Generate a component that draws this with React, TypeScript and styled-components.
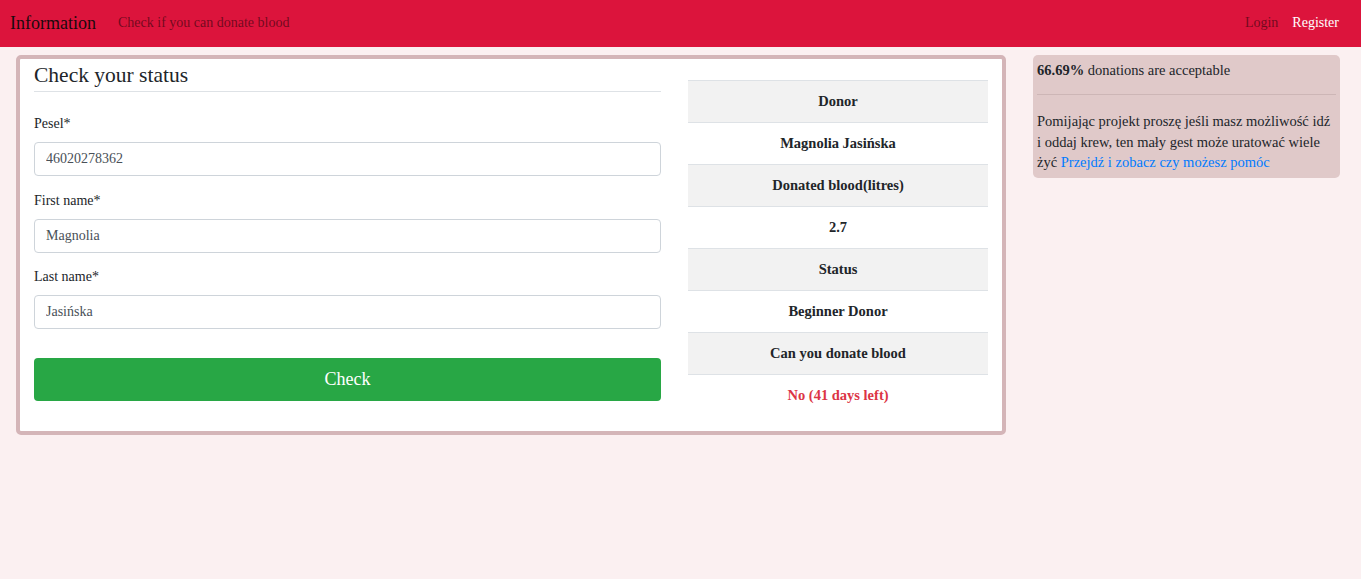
import React from "react";
import styled, { createGlobalStyle } from "styled-components";

const Global = createGlobalStyle`
  html, body { margin: 0; padding: 0; }
  body {
    background: #fbf0f1;
    font-family: "Liberation Serif", "Times New Roman", serif;
    font-size: 14px;
    color: #212529;
  }
  * { box-sizing: border-box; }
`;

const Nav = styled.nav`
  height: 47px;
  background: #dc143c;
  display: flex;
  align-items: center;
  padding: 0 22px 1px 10px;
`;

const Brand = styled.a`
  font-size: 18px;
  color: #1a0a0d;
  margin-right: 22px;
  text-decoration: none;
`;

const NavLink = styled.a<{ $light?: boolean }>`
  font-size: 14px;
  color: ${(p) => (p.$light ? "#ffffff" : "rgba(0,0,0,0.5)")};
  text-decoration: none;
  margin-left: ${(p) => (p.$light ? "14px" : "0")};
`;

const Spacer = styled.div`
  flex: 1;
`;

const Page = styled.div`
  display: grid;
  grid-template-columns: 990px 307px;
  column-gap: 27px;
  padding: 8px 0 0 16px;
  align-items: start;
`;

const Card = styled.section`
  background: #fff;
  border: 4px solid #d4b5b8;
  border-radius: 5px;
  display: grid;
  grid-template-columns: 1fr 300px;
  column-gap: 27px;
  padding: 0 14px 14px 14px;
`;

const Form = styled.form`
  display: flex;
  flex-direction: column;
`;

const Title = styled.h4`
  font-size: 21.5px;
  font-weight: 400;
  margin: 4px 0 0 0;
  line-height: 25px;
`;

const Rule = styled.hr`
  border: 0;
  border-top: 1px solid #dee2e6;
  margin: 3px 0 22px 0;
`;

const Group = styled.div`
  display: flex;
  flex-direction: column;
  margin-bottom: 14.5px;
`;

const Label = styled.label`
  line-height: 20px;
  margin-bottom: 8px;
`;

const Input = styled.input`
  height: 34px;
  border: 1px solid #ced4da;
  border-radius: 4px;
  padding: 0 11px;
  font-family: inherit;
  font-size: 14px;
  color: #495057;
  background: #fff;
`;

const Button = styled.button`
  margin-top: 14.5px;
  height: 43px;
  border: 0;
  border-radius: 4px;
  background: #28a745;
  color: #fff;
  font-family: inherit;
  font-size: 18px;
`;

const Table = styled.table`
  border-collapse: collapse;
  width: 300px;
  margin-top: 21px;
`;

const Cell = styled.td<{ $striped?: boolean; $danger?: boolean }>`
  height: 42px;
  padding: 0;
  text-align: center;
  font-weight: 700;
  font-size: 14.5px;
  border-top: 1px solid #dee2e6;
  background: ${(p) => (p.$striped ? "#f2f2f2" : "#fff")};
  color: ${(p) => (p.$danger ? "#dc3545" : "#212529")};
`;

const Side = styled.aside`
  background: #e0c9c9;
  border-radius: 5px;
  padding: 5px 4px;
  line-height: 20px;
  font-size: 14.5px;
`;

const SideP = styled.p`
  margin: 0;
`;

const SideRule = styled.hr`
  border: 0;
  border-top: 1px solid #cdb6b6;
  margin: 14px 0 16px 0;
`;

const SideText = styled.p`
  margin: 0;
  line-height: 20.5px;
`;

const Link = styled.a`
  color: #007bff;
  text-decoration: none;
`;

const rows: { text: string; danger?: boolean }[] = [
  { text: "Donor" },
  { text: "Magnolia Jasińska" },
  { text: "Donated blood(litres)" },
  { text: "2.7" },
  { text: "Status" },
  { text: "Beginner Donor" },
  { text: "Can you donate blood" },
  { text: "No (41 days left)", danger: true },
];

export default function App() {
  return (
    <>
      <Global />
      <Nav>
        <Brand href="#">Information</Brand>
        <NavLink href="#">Check if you can donate blood</NavLink>
        <Spacer />
        <NavLink href="#">Login</NavLink>
        <NavLink href="#" $light>
          Register
        </NavLink>
      </Nav>
      <Page>
        <Card>
          <Form onSubmit={(e) => e.preventDefault()}>
            <Title>Check your status</Title>
            <Rule />
            <Group>
              <Label>Pesel*</Label>
              <Input defaultValue="46020278362" />
            </Group>
            <Group>
              <Label>First name*</Label>
              <Input defaultValue="Magnolia" />
            </Group>
            <Group>
              <Label>Last name*</Label>
              <Input defaultValue="Jasińska" />
            </Group>
            <Button type="submit">Check</Button>
          </Form>
          <Table>
            <tbody>
              {rows.map((r, i) => (
                <tr key={i}>
                  <Cell $striped={i % 2 === 0} $danger={r.danger}>
                    {r.text}
                  </Cell>
                </tr>
              ))}
            </tbody>
          </Table>
        </Card>
        <Side>
          <SideP>
            <b>66.69%</b> donations are acceptable
          </SideP>
          <SideRule />
          <SideText>
            Pomijając projekt proszę jeśli masz możliwość idź i oddaj krew, ten mały gest może
            uratować wiele żyć <Link href="#">Przejdź i zobacz czy możesz pomóc</Link>
          </SideText>
        </Side>
      </Page>
    </>
  );
}
